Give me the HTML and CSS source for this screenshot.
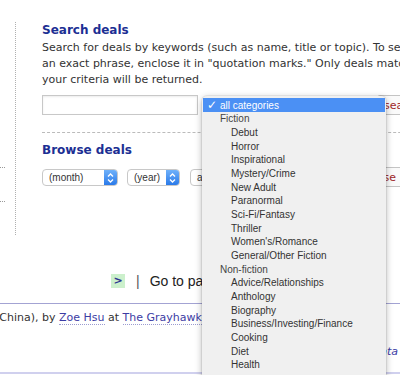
FILE: index.html
```html
<!DOCTYPE html>
<html lang="en">
<head>
    <meta charset="UTF-8">
    <meta name="viewport" content="width=device-width, initial-scale=1.0">
    <title>Search deals</title>
    <link rel="stylesheet" href="styles.css">
</head>
<body>
    <div class="page">
        <div class="top">
            <div class="side">
                <span class="tick"></span>
                <span class="tick"></span>
            </div>
            <div class="main">
                <h2>Search deals</h2>
                <p class="intro">Search for deals by keywords (such as name, title or topic). To search for<br>an exact phrase, enclose it in "quotation marks." Only deals matching<br>your criteria will be returned.</p>
                <div class="search-row">
                    <input class="keywords" type="text">
                    <div class="select w-cat-search"><span class="label">all categories</span><span class="stepper"><svg width="13" height="16" viewBox="0 0 13 16"><path d="M4 6.5 L6.5 4 L9 6.5 M4 9.5 L6.5 12 L9 9.5" fill="none" stroke="#fff" stroke-width="1.3"/></svg></span></div>
                    <button class="btn">search</button>
                </div>
                <h2 class="browse">Browse deals</h2>
                <div class="browse-row">
                    <div class="select w-month"><span class="label">(month)</span><span class="stepper"><svg width="13" height="16" viewBox="0 0 13 16"><path d="M4 6.5 L6.5 4 L9 6.5 M4 9.5 L6.5 12 L9 9.5" fill="none" stroke="#fff" stroke-width="1.3"/></svg></span></div>
                    <div class="select w-year"><span class="label">(year)</span><span class="stepper"><svg width="13" height="16" viewBox="0 0 13 16"><path d="M4 6.5 L6.5 4 L9 6.5 M4 9.5 L6.5 12 L9 9.5" fill="none" stroke="#fff" stroke-width="1.3"/></svg></span></div>
                    <div class="select w-cat"><span class="label">all categories</span><span class="stepper"><svg width="13" height="16" viewBox="0 0 13 16"><path d="M4 6.5 L6.5 4 L9 6.5 M4 9.5 L6.5 12 L9 9.5" fill="none" stroke="#fff" stroke-width="1.3"/></svg></span></div>
                    <button class="btn">Browse</button>
                </div>
            </div>
        </div>

        <div class="pager">
            <span class="next">&gt;</span>
            <span class="sep">|</span>
            <span class="goto">Go to page</span>
        </div>

        <div class="deal">
            <p class="deal-line">(China), by <a href="#">Zoe Hsu</a> at <a href="#">The Grayhawk Agency</a>, in a deal for the quarter</p>
            <p class="deal-meta"><a href="#">see deal data</a></p>
        </div>

        <!-- open category popup -->
        <ul class="menu">
            <li class="chosen"><span class="check">✓</span>all categories</li>
            <li class="group">Fiction</li>
            <li class="sub">Debut</li>
            <li class="sub">Horror</li>
            <li class="sub">Inspirational</li>
            <li class="sub">Mystery/Crime</li>
            <li class="sub">New Adult</li>
            <li class="sub">Paranormal</li>
            <li class="sub">Sci-Fi/Fantasy</li>
            <li class="sub">Thriller</li>
            <li class="sub">Women's/Romance</li>
            <li class="sub">General/Other Fiction</li>
            <li class="group">Non-fiction</li>
            <li class="sub">Advice/Relationships</li>
            <li class="sub">Anthology</li>
            <li class="sub">Biography</li>
            <li class="sub">Business/Investing/Finance</li>
            <li class="sub">Cooking</li>
            <li class="sub">Diet</li>
            <li class="sub">Health</li>
        </ul>
    </div>
</body>
</html>
```

FILE: styles.css
```css
/* page */
body {
    margin: 0;
    background-color: #fff;
    font-family: 'DejaVu Sans', Verdana, sans-serif;
    color: #333;
    overflow: hidden;
}

.page {
    position: relative;
    width: 400px;
    height: 375px;
    overflow: hidden;
}

.top {
    display: flex;
    margin-top: 22px;
}

.side {
    display: flex;
    flex-direction: column;
    gap: 33px;
    width: 15px;
    flex: none;
    padding-top: 145px;
}

.tick {
    width: 5px;
    border-top: 1px dotted #999;
}

.main {
    flex: none;
    width: 600px;
    height: 213px;
    padding-left: 26px;
    border-left: 1px dotted #b0b0b0;
}

h2 {
    margin: 0;
    font-size: 12px;
    line-height: 16px;
    font-weight: bold;
    color: #1c2f93;
}

.intro {
    margin: 2px 0 0;
    font-size: 11px;
    line-height: 16px;
    white-space: nowrap;
}

.search-row {
    display: flex;
    align-items: center;
    gap: 6px;
    margin-top: 7px;
    height: 20px;
    padding-bottom: 17px;
    border-bottom: 1px dashed #bbb;
}

.keywords {
    flex: none;
    width: 156px;
    height: 20px;
    box-sizing: border-box;
    border: 1px solid #c8c8c8;
    box-shadow: inset 0 1px 2px rgba(0, 0, 0, 0.08);
    margin: 0;
}

.btn {
    flex: none;
    height: 20px;
    padding: 0 6px;
    border: 1px solid #c4c4c4;
    border-radius: 3px;
    background-color: #fafafa;
    color: #a0282a;
    font-family: 'DejaVu Sans', Verdana, sans-serif;
    font-size: 11px;
}

.browse {
    margin-top: 9px;
}

.browse-row {
    display: flex;
    align-items: center;
    gap: 9px;
    margin-top: 9px;
}

.select {
    flex: none;
    display: flex;
    align-items: center;
    justify-content: space-between;
    height: 17px;
    box-sizing: border-box;
    border: 1px solid #c8c8c8;
    border-radius: 4px;
    background-color: #fff;
    font-family: 'Liberation Sans', Arial, sans-serif;
    font-size: 10px;
    color: #333;
    overflow: hidden;
}

.select .label {
    padding-left: 6px;
    white-space: nowrap;
}

.stepper {
    display: flex;
    width: 13px;
    height: 15px;
    flex: none;
    background: linear-gradient(#6fb1fa, #2a7ae9);
}

.w-month { width: 76px; }
.w-year { width: 53px; }
.w-cat { width: 150px; margin-left: 1px; }
.w-cat-search { width: 167px; height: 18px; }

.pager {
    display: flex;
    align-items: center;
    margin-top: 38px;
    padding-left: 111px;
    height: 16px;
}

.next {
    width: 14px;
    height: 14px;
    background-color: #ccf0cc;
    color: #2e3590;
    font-size: 11px;
    font-weight: bold;
    text-align: center;
    line-height: 14px;
}

.sep {
    margin-left: 11px;
    color: #555;
    font-family: 'Liberation Sans', Arial, sans-serif;
    font-size: 14px;
}

.goto {
    margin-left: 10px;
    color: #222;
    font-family: 'Liberation Sans', Arial, sans-serif;
    font-size: 14px;
}

.deal {
    margin-top: 14px;
    border-top: 1px solid #a3a3d3;
    border-bottom: 2px solid #d0d0ee;
    height: 68px;
}

.deal-line {
    margin: 6px 0 0 -5px;
    font-size: 11px;
    line-height: 16px;
    white-space: nowrap;
}

.deal-line a {
    color: #3c3ca4;
    text-decoration: none;
    border-bottom: 1px dotted #9c9cd0;
}

.deal-meta {
    margin: 18px 0 0;
    text-align: right;
    font-size: 11px;
    line-height: 16px;
    padding-right: 2px;
}

.deal-meta a {
    color: #3c3ca4;
    font-style: italic;
    text-decoration: none;
}

/* popup menu */
.menu {
    position: absolute;
    left: 202px;
    top: 96px;
    width: 184px;
    height: 300px;
    margin: 0;
    padding: 2px 1px 0;
    box-sizing: border-box;
    list-style: none;
    background-color: #f0f0f0;
    border-radius: 5px;
    box-shadow: 0 2px 7px rgba(0, 0, 0, 0.3), 0 0 0 1px rgba(0, 0, 0, 0.06);
    font-family: 'Liberation Sans', Arial, sans-serif;
    font-size: 10px;
    color: #333;
}

.menu li {
    display: flex;
    align-items: center;
    height: 13.68px;
    padding-left: 17px;
    white-space: nowrap;
}

.menu li.sub {
    padding-left: 28px;
}

.menu li.group {
    color: #444;
}

.menu li.chosen {
    position: relative;
    height: 14px;
    background-color: #4b90f4;
    color: #fff;
}

.check {
    position: absolute;
    left: 4px;
    font-family: 'DejaVu Sans', sans-serif;
    font-size: 12px;
    font-weight: bold;
}
```
